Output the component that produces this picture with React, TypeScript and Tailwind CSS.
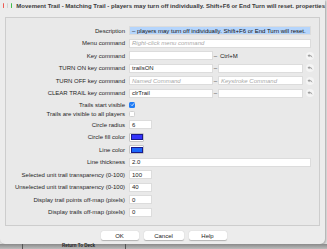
import type { JSX } from "react";

const Undo = (): JSX.Element => (
  <div className="flex h-[8px] w-[8px] items-center justify-center rounded-full bg-[#f4f4f4]">
    <svg viewBox="0 0 16 16" className="h-[6px] w-[6px]">
      <path
        d="M6.5 2.5 L1.5 7 L6.5 11.5 V8.6 C10 8.4 12.6 9.8 14.5 13 C14 8.6 11.2 5.8 6.5 5.5 Z"
        fill="#9b9b9b"
      />
    </svg>
  </div>
);

const Field = ({ value = "", placeholder = "", w = "w-[182px]" }: { value?: string; placeholder?: string; w?: string }): JSX.Element => (
  <div className={`flex h-[9px] items-center border border-[#dcdcdc] bg-white px-[2px] ${w}`}>
    {value ? (
      <span className="text-[#222]">{value}</span>
    ) : (
      <span className="italic text-[#a8a8a8]">{placeholder}</span>
    )}
  </div>
);

const Row = ({ label, children, h = "h-[12.5px]" }: { label: string; children?: React.ReactNode; h?: string }): JSX.Element => (
  <div className={`flex items-center gap-[4px] ${h}`}>
    <div className="w-[119px] shrink-0 text-right text-[#1f1f1f]">{label}</div>
    {children}
  </div>
);

const KeyRow = ({ label, a, b, pa, pb, plain }: { label: string; a?: string; b?: string; pa?: string; pb?: string; plain?: string }): JSX.Element => (
  <Row label={label}>
    <div className="flex items-center">
      <Field value={a} placeholder={pa} w="w-[84px]" />
      <span className="w-[5px] text-center text-[#333]">–</span>
      {plain ? (
        <div className="w-[85px] pl-[2px] text-[#222]">{plain}</div>
      ) : (
        <Field value={b} placeholder={pb} w="w-[85px]" />
      )}
      <div className="ml-[3px]">
        <Undo />
      </div>
    </div>
  </Row>
);

const Check = ({ on }: { on?: boolean }): JSX.Element =>
  on ? (
    <div className="flex h-[6px] w-[6px] items-center justify-center rounded-[1.5px] bg-[#1f7cf5]">
      <svg viewBox="0 0 10 10" className="h-[5px] w-[5px]">
        <path d="M2 5.2 L4.2 7.4 L8.2 2.6" stroke="white" strokeWidth="1.6" fill="none" />
      </svg>
    </div>
  ) : (
    <div className="h-[6px] w-[6px] rounded-[1.5px] border border-[#d0d0d0] bg-white" />
  );

const Swatch = ({ color }: { color: string }): JSX.Element => (
  <div className="flex h-[9px] w-[15px] items-center justify-center rounded-[1px] border border-[#c4c4c4] bg-white">
    <div className="h-[6px] w-[12px] border border-[#1a1a8a]" style={{ backgroundColor: color }} />
  </div>
);

const App = (): JSX.Element => {
  return (
    <div
      className="h-[249px] w-[327px] overflow-hidden bg-[#e2e2e2] text-[6px] leading-none"
      style={{ fontFamily: '"Liberation Sans", Arial, sans-serif' }}
    >
      <div className="flex h-[244px] w-[325px] flex-col rounded-b-[5px] bg-[#ececec] shadow-[1px_1px_2px_rgba(0,0,0,0.25)]">
        {/* title bar */}
        <div className="flex h-[11px] items-center gap-[3.5px] pl-[3px]">
          <div className="h-[4.5px] w-[4.5px] rounded-full bg-[#ee5a52]" />
          <div className="h-[4.5px] w-[4.5px] rounded-full bg-[#d2d2d2]" />
          <div className="h-[4.5px] w-[4.5px] rounded-full bg-[#3fbf4a]" />
          <div className="ml-[2px] whitespace-nowrap font-bold text-[#3a3a3a]">
            Movement Trail - Matching Trail - players may turn off individually. Shift+F6 or End Turn will reset. properties
          </div>
        </div>

        {/* panel */}
        <div className="ml-[5px] mt-[6px] w-[315px] border border-[#cdcdcd] bg-[#e9e9e9] pb-[6px] pt-[6.5px]">
          <Row label="Description">
            <div className="flex h-[9px] w-[182px] items-center border border-[#dcdcdc] bg-[#b5d5fc] px-[2px] text-[#111] whitespace-nowrap">
              – players may turn off individually. Shift+F6 or End Turn will reset.
            </div>
          </Row>
          <Row label="Menu command">
            <Field placeholder="Right-click menu command" />
          </Row>
          <KeyRow label="Key command" plain="Ctrl+M" />
          <KeyRow label="TURN ON key command" a="trailsON" />
          <KeyRow label="TURN OFF key command" pa="Named Command" pb="Keystroke Command" />
          <KeyRow label="CLEAR TRAIL key command" a="clrTrail" />
          <Row label="Trails start visible" h="h-[10px]">
            <Check on />
          </Row>
          <Row label="Trails are visible to all players" h="h-[9px]">
            <Check />
          </Row>
          <Row label="Circle radius">
            <Field value="6" w="w-[23px]" />
          </Row>
          <Row label="Circle fill color">
            <Swatch color="#3434fb" />
          </Row>
          <Row label="Line color">
            <Swatch color="#1d68fb" />
          </Row>
          <Row label="Line thickness">
            <Field value="2.0" />
          </Row>
          <Row label="Selected unit trail transparency (0-100)">
            <Field value="100" w="w-[23px]" />
          </Row>
          <Row label="Unselected unit trail transparency (0-100)">
            <Field value="40" w="w-[23px]" />
          </Row>
          <Row label="Display trail points off-map (pixels)">
            <Field value="0" w="w-[23px]" />
          </Row>
          <Row label="Display trails off-map (pixels)">
            <Field value="0" w="w-[23px]" />
          </Row>
        </div>

        {/* buttons */}
        <div className="mt-[5.5px] flex justify-center gap-[5px] pl-[2px]">
          {["OK", "Cancel", "Help"].map((b) => (
            <div
              key={b}
              className={`flex h-[9px] items-center justify-center rounded-[2px] bg-white text-[#222] shadow-[0_0.5px_1px_rgba(0,0,0,0.25)] ${b === "Cancel" ? "w-[40px]" : "w-[38px]"}`}
            >
              {b}
            </div>
          ))}
        </div>
      </div>

      {/* background app strip */}
      <div className="relative flex h-[5px] w-[327px] items-center bg-gradient-to-b from-[#8a8a8a] to-[#bdbdbd]">
        <div className="absolute left-[22px] top-0 h-full w-px bg-[#555]" />
        <div className="absolute left-[125px] top-0 h-full w-px bg-[#555]" />
        <div className="ml-[62px] text-[4.5px] font-bold leading-none text-[#222]">Return To Deck</div>
      </div>
    </div>
  );
};

export default App;
